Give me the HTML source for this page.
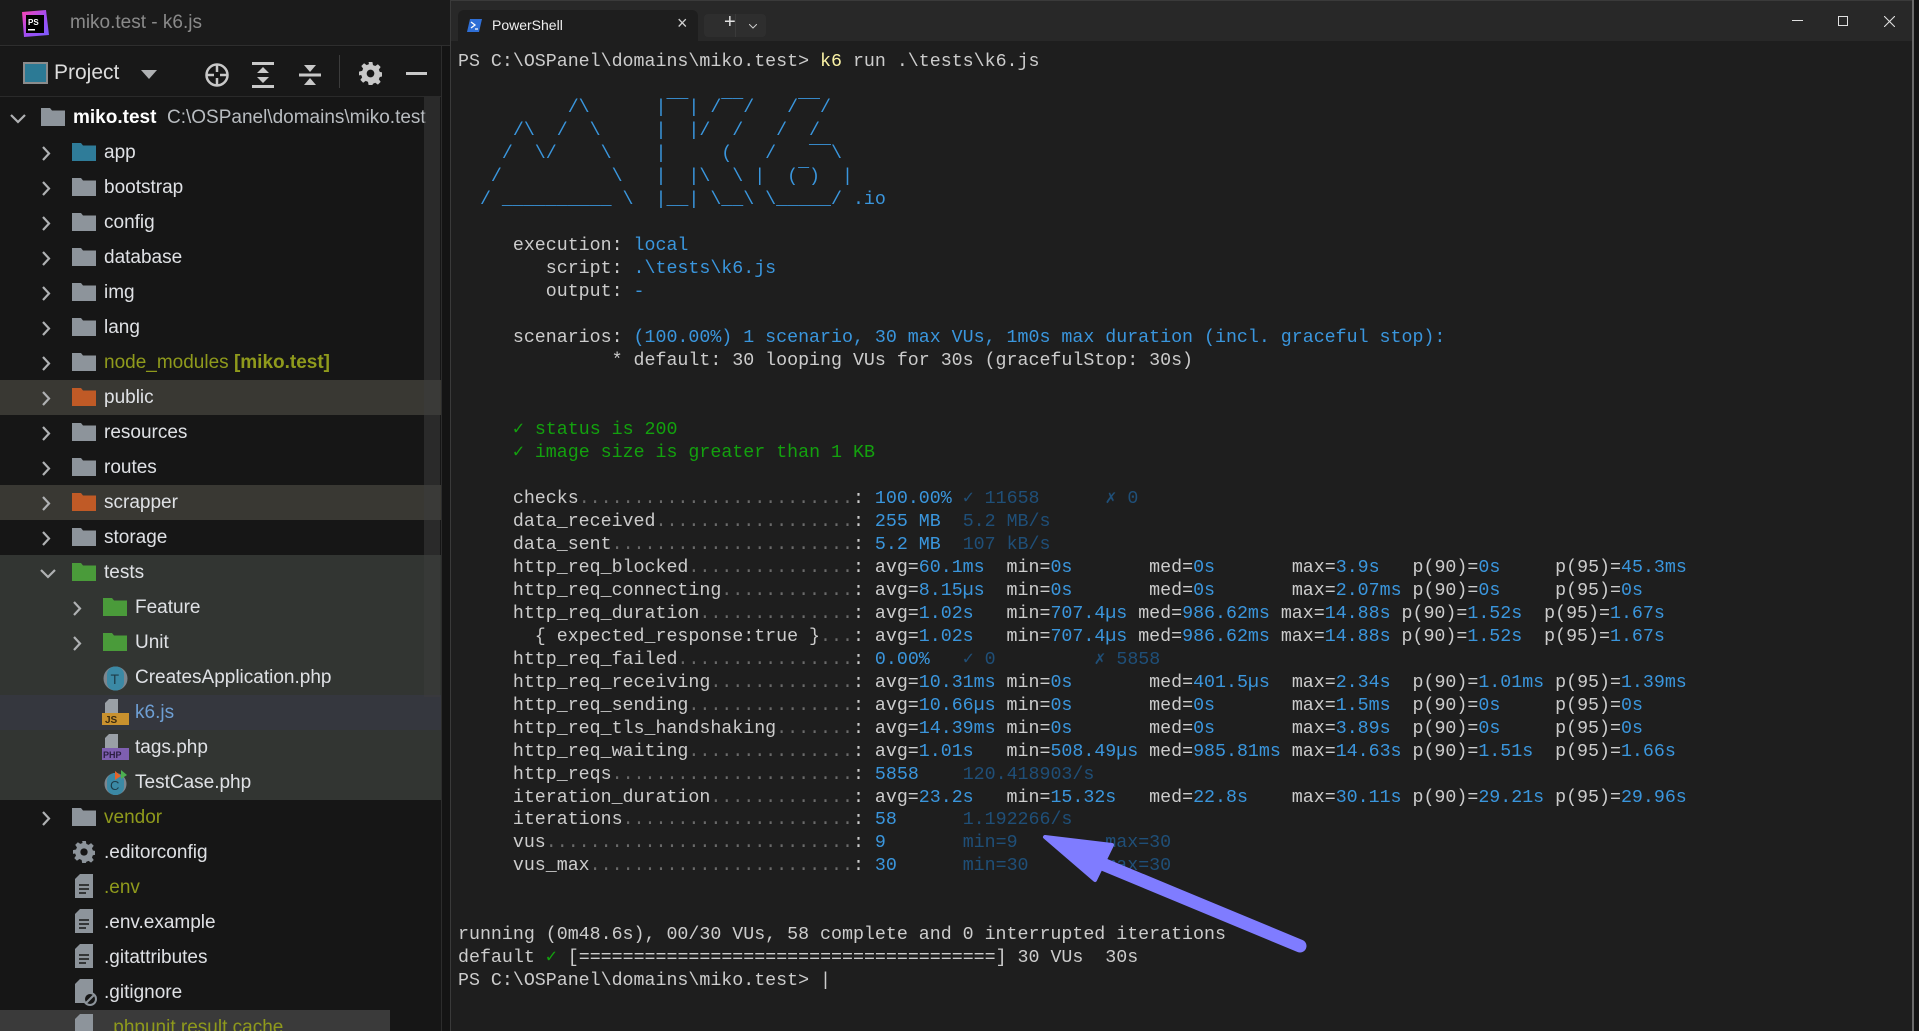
<!DOCTYPE html>
<html><head><meta charset="utf-8"><style>
*{margin:0;padding:0;box-sizing:border-box}
html,body{width:1919px;height:1031px;overflow:hidden;background:#161616}
body{position:relative;font-family:"Liberation Sans",sans-serif}
.abs{position:absolute}
#title{left:0;top:0;width:450px;height:46px;background:#1b1b1b;border-bottom:1px solid #2e2e2e}
#tool{left:0;top:47px;width:441px;height:50px;background:#181818;border-bottom:1px solid #2a2a2a}
#tree{left:0;top:100px;width:441px;height:931px;background:#161616;overflow:hidden}
.row{position:absolute;left:0;width:441px;height:35px;font-size:19px;color:#dfe1e5;line-height:35px;white-space:nowrap}
.row svg{position:absolute}
.chev{position:absolute;top:11px}
.ol{color:#8f9a1c}
#sb{left:424px;top:97px;width:16px;height:600px;background:rgba(60,60,60,.55);z-index:5}
#div{left:441px;top:46px;width:9px;height:985px;background:#141414;border-left:1px solid #2c2c2c}
#term{left:450px;top:0;width:1463px;height:1031px;background:#1e1e1e;border-left:1px solid #3a3a3a;border-top:1px solid #3a3a3a}
#tabbar{left:451px;top:1px;width:1461px;height:40px;background:#282828}
#rightstrip{left:1912px;top:0;width:7px;height:1031px;background:#141414;border-left:2px solid #6a6a6a}
pre{position:absolute;left:458px;top:51px;font-family:"Liberation Mono",monospace;font-size:18.3px;line-height:22.98px;color:#cccccc;white-space:pre}
.c{color:#3a96dd}.d{color:#1f4f78}.g{color:#13a10e}.y{color:#f9f1a5}.t{color:#6a6a6a}
</style></head><body>
<div id="title" class="abs">
 <svg class="abs" style="left:20px;top:9px" width="30" height="29" viewBox="0 0 30 29"><defs><linearGradient id="pg" x1="0" y1="0" x2="1" y2="1"><stop offset="0" stop-color="#ff45b0"/><stop offset=".5" stop-color="#a44cf0"/><stop offset="1" stop-color="#7a5cff"/></linearGradient></defs><path d="M2 3 L26 1 L29 26 L4 28Z" fill="url(#pg)"/><rect x="6" y="6" width="18" height="18" fill="#000"/><text x="8" y="16" font-size="8" font-weight="bold" fill="#fff" font-family="Liberation Sans">PS</text><rect x="8" y="20" width="7" height="1.5" fill="#fff"/></svg>
 <div class="abs" style="left:70px;top:12px;font-size:19px;color:#8a8a8a">miko.test - k6.js</div>
</div>
<div id="tool" class="abs">
 <div class="abs" style="left:23px;top:15px;width:25px;height:22px;border:2px solid #8c8c8c;background:#2c7a95"></div>
 <div class="abs" style="left:54px;top:14px;font-size:21px;color:#dcdcdc">Project</div>
 <svg class="abs" style="left:141px;top:23px" width="16" height="10"><path d="M0 0H16L8 9Z" fill="#afb1b3"/></svg>
 <svg class="abs" style="left:204px;top:15px" width="26" height="26" viewBox="0 0 26 26" fill="none" stroke="#c8c8c8" stroke-width="2.5"><circle cx="13" cy="13" r="10.5"/><path d="M13 2v8M13 16v8M2 13h8M16 13h8"/></svg>
 <svg class="abs" style="left:252px;top:15px" width="22" height="26" viewBox="0 0 22 26" fill="#c8c8c8"><rect x="0" y="0" width="22" height="3"/><rect x="0" y="23" width="22" height="3"/><path d="M11 5L17 11H5Z M11 21L17 15H5Z"/></svg>
 <svg class="abs" style="left:299px;top:15px" width="22" height="26" viewBox="0 0 22 26" fill="#c8c8c8"><rect x="0" y="11.5" width="22" height="3"/><path d="M11 10L17 3H5Z M11 16L17 23H5Z"/></svg>
 <div class="abs" style="left:339px;top:8px;width:1px;height:33px;background:#3c3c3c"></div>
 <svg class="abs" style="left:359px;top:15px" width="23" height="23" viewBox="0 0 24 24"><path fill="#c8c8c8" d="M10 0h4l.6 3.2 2.4 1 2.7-1.9 2.9 2.9-1.9 2.7 1 2.4 3.3.7v4l-3.3.6-1 2.4 1.9 2.7-2.9 2.9-2.7-1.9-2.4 1L14 24h-4l-.6-3.3-2.4-1-2.7 1.9-2.9-2.9 1.9-2.7-1-2.4L0 14v-4l3.3-.7 1-2.4-1.9-2.7 2.9-2.9 2.7 1.9 2.4-1z"/><circle cx="12" cy="12" r="4" fill="#181818"/></svg>
 <div class="abs" style="left:406px;top:25px;width:21px;height:3px;background:#c8c8c8"></div>
</div>
<div id="tree" class="abs">
<svg width="0" height="0" style="position:absolute"><defs><path id="fold" d="M0 1h9l2 2.5h13V19H0z"/><path id="chv" d="M1 1l6 6.5L1 14" fill="none" stroke="#afb1b3" stroke-width="2.2"/><path id="chd" d="M1 1l7 7 7-7" fill="none" stroke="#afb1b3" stroke-width="2.2"/></defs></svg>
<div class="row" style="top:0"><svg class="chev" style="left:10px;top:14px" width="17" height="10"><use href="#chd"/></svg><svg style="left:41px;top:7px" width="24" height="20"><use href="#fold" fill="#8d949b"/></svg><span style="position:absolute;left:73px"><b style="color:#fff">miko.test</b>&nbsp; <span style="color:#b8bcc0">C:\OSPanel\domains\miko.test</span></span></div>
<div class="row" style="top:35px"><svg class="chev" style="left:42px" width="9" height="16"><use href="#chv"/></svg><svg style="left:72px;top:7px" width="24" height="20"><use href="#fold" fill="#2f7c99"/></svg><span style="position:absolute;left:104px">app</span></div>
<div class="row" style="top:70px"><svg class="chev" style="left:42px" width="9" height="16"><use href="#chv"/></svg><svg style="left:72px;top:7px" width="24" height="20"><use href="#fold" fill="#8d949b"/></svg><span style="position:absolute;left:104px">bootstrap</span></div>
<div class="row" style="top:105px"><svg class="chev" style="left:42px" width="9" height="16"><use href="#chv"/></svg><svg style="left:72px;top:7px" width="24" height="20"><use href="#fold" fill="#8d949b"/></svg><span style="position:absolute;left:104px">config</span></div>
<div class="row" style="top:140px"><svg class="chev" style="left:42px" width="9" height="16"><use href="#chv"/></svg><svg style="left:72px;top:7px" width="24" height="20"><use href="#fold" fill="#8d949b"/></svg><span style="position:absolute;left:104px">database</span></div>
<div class="row" style="top:175px"><svg class="chev" style="left:42px" width="9" height="16"><use href="#chv"/></svg><svg style="left:72px;top:7px" width="24" height="20"><use href="#fold" fill="#8d949b"/></svg><span style="position:absolute;left:104px">img</span></div>
<div class="row" style="top:210px"><svg class="chev" style="left:42px" width="9" height="16"><use href="#chv"/></svg><svg style="left:72px;top:7px" width="24" height="20"><use href="#fold" fill="#8d949b"/></svg><span style="position:absolute;left:104px">lang</span></div>
<div class="row" style="top:245px"><svg class="chev" style="left:42px" width="9" height="16"><use href="#chv"/></svg><svg style="left:72px;top:7px" width="24" height="20"><use href="#fold" fill="#8d949b"/></svg><span style="position:absolute;left:104px" class="ol">node_modules <b>[miko.test]</b></span></div>
<div class="row" style="top:280px;background:#393833"><svg class="chev" style="left:42px" width="9" height="16"><use href="#chv"/></svg><svg style="left:72px;top:7px" width="24" height="20"><use href="#fold" fill="#c05a26"/></svg><span style="position:absolute;left:104px">public</span></div>
<div class="row" style="top:315px"><svg class="chev" style="left:42px" width="9" height="16"><use href="#chv"/></svg><svg style="left:72px;top:7px" width="24" height="20"><use href="#fold" fill="#8d949b"/></svg><span style="position:absolute;left:104px">resources</span></div>
<div class="row" style="top:350px"><svg class="chev" style="left:42px" width="9" height="16"><use href="#chv"/></svg><svg style="left:72px;top:7px" width="24" height="20"><use href="#fold" fill="#8d949b"/></svg><span style="position:absolute;left:104px">routes</span></div>
<div class="row" style="top:385px;background:#393833"><svg class="chev" style="left:42px" width="9" height="16"><use href="#chv"/></svg><svg style="left:72px;top:7px" width="24" height="20"><use href="#fold" fill="#c05a26"/></svg><span style="position:absolute;left:104px">scrapper</span></div>
<div class="row" style="top:420px"><svg class="chev" style="left:42px" width="9" height="16"><use href="#chv"/></svg><svg style="left:72px;top:7px" width="24" height="20"><use href="#fold" fill="#8d949b"/></svg><span style="position:absolute;left:104px">storage</span></div>
<div class="abs" style="left:0;top:455px;width:441px;height:245px;background:#323532"></div>
<div class="row" style="top:455px"><svg class="chev" style="left:40px;top:14px" width="17" height="10"><use href="#chd"/></svg><svg style="left:72px;top:7px" width="24" height="20"><use href="#fold" fill="#4a9b3a"/></svg><span style="position:absolute;left:104px">tests</span></div>
<div class="row" style="top:490px"><svg class="chev" style="left:73px" width="9" height="16"><use href="#chv"/></svg><svg style="left:103px;top:7px" width="24" height="20"><use href="#fold" fill="#4a9b3a"/></svg><span style="position:absolute;left:135px">Feature</span></div>
<div class="row" style="top:525px"><svg class="chev" style="left:73px" width="9" height="16"><use href="#chv"/></svg><svg style="left:103px;top:7px" width="24" height="20"><use href="#fold" fill="#4a9b3a"/></svg><span style="position:absolute;left:135px">Unit</span></div>
<div class="row" style="top:560px"><svg style="left:103px;top:6px" width="25" height="25"><circle cx="12.5" cy="12.5" r="12" fill="#7d868e"/><rect x="4" y="0.5" width="17" height="24" rx="8" fill="#3b89a5"/><text x="7.5" y="18" font-size="14" fill="#1d3b48" font-family="Liberation Sans">T</text></svg><span style="position:absolute;left:135px">CreatesApplication.php</span></div>
<div class="row" style="top:595px;background:#35373e"><svg style="left:102px;top:4px" width="27" height="27"><path d="M7 0h9v14H3V4z" fill="#9aa0a6"/><rect x="0" y="14" width="27" height="12" fill="#c9912e"/><text x="3" y="24" font-size="10" font-weight="bold" fill="#3a2a10" font-family="Liberation Sans">JS</text></svg><span style="position:absolute;left:135px;color:#6e9fd4">k6.js</span></div>
<div class="row" style="top:630px"><svg style="left:102px;top:4px" width="27" height="27"><path d="M7 0h9v14H3V4z" fill="#9aa0a6"/><rect x="0" y="14" width="27" height="12" fill="#7e5fb0"/><text x="1" y="24" font-size="9" font-weight="bold" fill="#2a1d40" font-family="Liberation Sans">PHP</text></svg><span style="position:absolute;left:135px">tags.php</span></div>
<div class="row" style="top:665px"><svg style="left:103px;top:5px" width="26" height="26"><circle cx="12.5" cy="14" r="11" fill="#7d868e"/><rect x="4" y="3" width="17" height="22" rx="8" fill="#3b89a5"/><text x="7" y="20" font-size="13" fill="#1d3b48" font-family="Liberation Sans">C</text><path d="M12 1l6 5-6 4z" fill="#e4642a"/><path d="M18 0l6 5-6 4z" fill="#4caf50"/></svg><span style="position:absolute;left:135px">TestCase.php</span></div>
<div class="row" style="top:700px"><svg class="chev" style="left:42px" width="9" height="16"><use href="#chv"/></svg><svg style="left:72px;top:7px" width="24" height="20"><use href="#fold" fill="#8d949b"/></svg><span style="position:absolute;left:104px" class="ol">vendor</span></div>
<div class="row" style="top:735px"><svg style="left:73px;top:6px" width="22" height="22" viewBox="0 0 24 24"><path fill="#8d949b" d="M10 0h4l.6 3.2 2.4 1 2.7-1.9 2.9 2.9-1.9 2.7 1 2.4 3.3.7v4l-3.3.6-1 2.4 1.9 2.7-2.9 2.9-2.7-1.9-2.4 1L14 24h-4l-.6-3.3-2.4-1-2.7 1.9-2.9-2.9 1.9-2.7-1-2.4L0 14v-4l3.3-.7 1-2.4-1.9-2.7 2.9-2.9 2.7 1.9 2.4-1z"/><circle cx="12" cy="12" r="4" fill="#161616"/></svg><span style="position:absolute;left:104px">.editorconfig</span></div>
<div class="row" style="top:770px"><svg style="left:75px;top:4px" width="18" height="25"><path d="M5 0h13v24H0V5z" fill="#8d949b"/><path d="M4 11h10M4 15h10M4 19h7" stroke="#161616" stroke-width="1.5"/></svg><span style="position:absolute;left:104px" class="ol">.env</span></div>
<div class="row" style="top:805px"><svg style="left:75px;top:4px" width="18" height="25"><path d="M5 0h13v24H0V5z" fill="#8d949b"/><path d="M4 11h10M4 15h10M4 19h7" stroke="#161616" stroke-width="1.5"/></svg><span style="position:absolute;left:104px">.env.example</span></div>
<div class="row" style="top:840px"><svg style="left:75px;top:4px" width="18" height="25"><path d="M5 0h13v24H0V5z" fill="#8d949b"/><path d="M4 11h10M4 15h10M4 19h7" stroke="#161616" stroke-width="1.5"/></svg><span style="position:absolute;left:104px">.gitattributes</span></div>
<div class="row" style="top:875px"><svg style="left:75px;top:4px" width="22" height="28"><path d="M5 0h13v24H0V5z" fill="#8d949b"/><circle cx="15" cy="20" r="6" fill="#161616" stroke="#8d949b" stroke-width="2"/><path d="M11 24l8-8" stroke="#8d949b" stroke-width="2"/></svg><span style="position:absolute;left:104px">.gitignore</span></div>
<div class="row" style="top:910px;background:#3a3a3a;width:390px"><svg style="left:75px;top:4px" width="18" height="25"><path d="M5 0h13v24H0V5z" fill="#8d949b"/></svg><span style="position:absolute;left:108px" class="ol">.phpunit.result.cache</span></div>
</div>
<div id="sb" class="abs"></div>
<div id="div" class="abs"></div>
<div id="term" class="abs"></div>
<div id="tabbar" class="abs">
 <div class="abs" style="left:7px;top:9px;width:240px;height:31px;background:#1e1e1e;border-radius:6px 6px 0 0"></div>
 <svg class="abs" style="left:16px;top:18px" width="15" height="13"><path d="M3 0h12l-3 13H0z" fill="#2f6fd6"/><path d="M4 3l4 3-4 3M8 10h3" stroke="#fff" stroke-width="1.3" fill="none"/></svg>
 <div class="abs" style="left:41px;top:16px;font-size:14px;color:#f0f0f0">PowerShell</div>
 <div class="abs" style="left:226px;top:12px;font-size:18px;color:#d0d0d0">×</div>
 <div class="abs" style="left:253px;top:13px;width:62px;height:23px;background:#2e2e2e;border-radius:4px"></div>
 <div class="abs" style="left:284px;top:13px;width:1px;height:23px;background:#3a3a3a"></div>
 <div class="abs" style="left:273px;top:10px;font-size:20px;color:#e0e0e0">+</div>
 <svg class="abs" style="left:298px;top:23px" width="8" height="5"><path d="M0 0l4 4 4-4" stroke="#ccc" fill="none"/></svg>
 <div class="abs" style="left:1341px;top:19px;width:11px;height:1px;background:#e0e0e0"></div>
 <div class="abs" style="left:1387px;top:15px;width:10px;height:10px;border:1px solid #e0e0e0"></div>
 <svg class="abs" style="left:1433px;top:15px" width="11" height="11"><path d="M0 0l11 11M11 0L0 11" stroke="#e0e0e0" stroke-width="1.1"/></svg>
</div>
<div id="rightstrip" class="abs"></div>
<pre>PS C:\OSPanel\domains\miko.test&gt; <span class="y">k6</span> run .\tests\k6.js

<span class="c">          /\      |‾‾| /‾‾/   /‾‾/
     /\  /  \     |  |/  /   /  /
    /  \/    \    |     (   /   ‾‾\
   /          \   |  |\  \ |  (‾)  |
  / __________ \  |__| \__\ \_____/ .io</span>

     execution: <span class="c">local</span>
        script: <span class="c">.\tests\k6.js</span>
        output: <span class="c">-</span>

     scenarios: <span class="c">(100.00%) 1 scenario, 30 max VUs, 1m0s max duration (incl. graceful stop):</span>
              * default: 30 looping VUs for 30s (gracefulStop: 30s)


     <span class="g">✓ status is 200</span>
     <span class="g">✓ image size is greater than 1 KB</span>

     checks<span class="t">.........................</span>: <span class="c">100.00%</span> <span class="d">✓ 11658</span>      <span class="d">✗ 0</span>
     data_received<span class="t">..................</span>: <span class="c">255 MB</span>  <span class="d">5.2 MB/s</span>
     data_sent<span class="t">......................</span>: <span class="c">5.2 MB</span>  <span class="d">107 kB/s</span>
     http_req_blocked<span class="t">...............</span>: avg=<span class="c">60.1ms</span>  min=<span class="c">0s</span>       med=<span class="c">0s</span>       max=<span class="c">3.9s</span>   p(90)=<span class="c">0s</span>     p(95)=<span class="c">45.3ms</span>
     http_req_connecting<span class="t">............</span>: avg=<span class="c">8.15µs</span>  min=<span class="c">0s</span>       med=<span class="c">0s</span>       max=<span class="c">2.07ms</span> p(90)=<span class="c">0s</span>     p(95)=<span class="c">0s</span>
     http_req_duration<span class="t">..............</span>: avg=<span class="c">1.02s</span>   min=<span class="c">707.4µs</span> med=<span class="c">986.62ms</span> max=<span class="c">14.88s</span> p(90)=<span class="c">1.52s</span>  p(95)=<span class="c">1.67s</span>
       { expected_response:true }<span class="t">...</span>: avg=<span class="c">1.02s</span>   min=<span class="c">707.4µs</span> med=<span class="c">986.62ms</span> max=<span class="c">14.88s</span> p(90)=<span class="c">1.52s</span>  p(95)=<span class="c">1.67s</span>
     http_req_failed<span class="t">................</span>: <span class="c">0.00%</span>   <span class="d">✓ 0</span>         <span class="d">✗ 5858</span>
     http_req_receiving<span class="t">.............</span>: avg=<span class="c">10.31ms</span> min=<span class="c">0s</span>       med=<span class="c">401.5µs</span>  max=<span class="c">2.34s</span>  p(90)=<span class="c">1.01ms</span> p(95)=<span class="c">1.39ms</span>
     http_req_sending<span class="t">...............</span>: avg=<span class="c">10.66µs</span> min=<span class="c">0s</span>       med=<span class="c">0s</span>       max=<span class="c">1.5ms</span>  p(90)=<span class="c">0s</span>     p(95)=<span class="c">0s</span>
     http_req_tls_handshaking<span class="t">.......</span>: avg=<span class="c">14.39ms</span> min=<span class="c">0s</span>       med=<span class="c">0s</span>       max=<span class="c">3.89s</span>  p(90)=<span class="c">0s</span>     p(95)=<span class="c">0s</span>
     http_req_waiting<span class="t">...............</span>: avg=<span class="c">1.01s</span>   min=<span class="c">508.49µs</span> med=<span class="c">985.81ms</span> max=<span class="c">14.63s</span> p(90)=<span class="c">1.51s</span>  p(95)=<span class="c">1.66s</span>
     http_reqs<span class="t">......................</span>: <span class="c">5858</span>    <span class="d">120.418903/s</span>
     iteration_duration<span class="t">.............</span>: avg=<span class="c">23.2s</span>   min=<span class="c">15.32s</span>   med=<span class="c">22.8s</span>    max=<span class="c">30.11s</span> p(90)=<span class="c">29.21s</span> p(95)=<span class="c">29.96s</span>
     iterations<span class="t">.....................</span>: <span class="c">58</span>      <span class="d">1.192266/s</span>
     vus<span class="t">............................</span>: <span class="c">9</span>       <span class="d">min=9        max=30</span>
     vus_max<span class="t">........................</span>: <span class="c">30</span>      <span class="d">min=30       max=30</span>


running (0m48.6s), 00/30 VUs, 58 complete and 0 interrupted iterations
default <span class="g">✓</span> [======================================] 30 VUs  30s
PS C:\OSPanel\domains\miko.test&gt; |</pre>
<svg class="abs" style="left:0;top:0" width="1919" height="1031"><path d="M1300 946 L1088 858" stroke="#7f7cff" stroke-width="13" stroke-linecap="round"/><path d="M1045 837 L1112 845 L1095 880Z" fill="#7f7cff" stroke="#7f7cff" stroke-width="4" stroke-linejoin="round"/></svg>
</body></html>
